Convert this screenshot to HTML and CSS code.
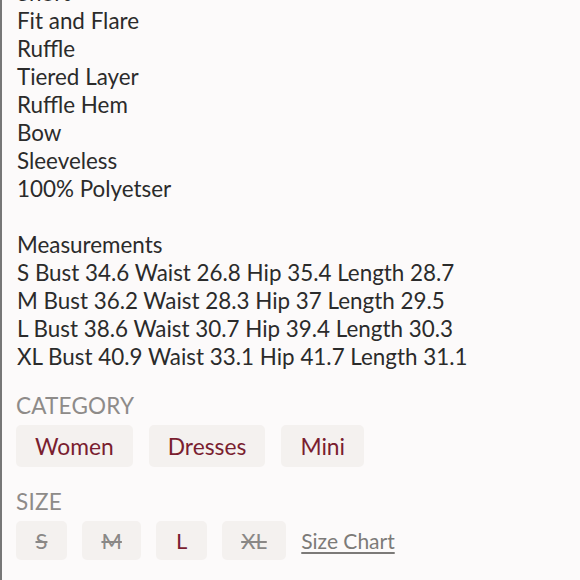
FILE: index.html
```html
<!DOCTYPE html>
<html>
<head>
<meta charset="utf-8">
<link rel="stylesheet" href="styles.css">
</head>
<body>
<div class="page">
  <div class="desc">
    <div>Short</div>
    <div>Fit and Flare</div>
    <div>Ruffle</div>
    <div>Tiered Layer</div>
    <div>Ruffle Hem</div>
    <div>Bow</div>
    <div>Sleeveless</div>
    <div>100% Polyetser</div>
    <div class="blank">&nbsp;</div>
    <div>Measurements</div>
    <div>S Bust 34.6 Waist 26.8 Hip 35.4 Length 28.7</div>
    <div>M Bust 36.2 Waist 28.3 Hip 37 Length 29.5</div>
    <div>L Bust 38.6 Waist 30.7 Hip 39.4 Length 30.3</div>
    <div>XL Bust 40.9 Waist 33.1 Hip 41.7 Length 31.1</div>
  </div>

  <div class="section category">
    <div class="label">Category</div>
    <div class="chips">
      <span class="chip">Women</span>
      <span class="chip">Dresses</span>
      <span class="chip">Mini</span>
    </div>
  </div>

  <div class="section size">
    <div class="label">Size</div>
    <div class="chips">
      <span class="chip size-chip out">S</span>
      <span class="chip size-chip out">M</span>
      <span class="chip size-chip">L</span>
      <span class="chip size-chip out">XL</span>
      <a class="size-chart" href="#">Size Chart</a>
    </div>
  </div>
</div>
</body>
</html>
```

FILE: styles.css
```css
html, body {
  margin: 0;
  padding: 0;
  background: #fcfafa;
}
body {
  font-family: "Lato", "Liberation Sans", sans-serif;
  color: #2b2b2b;
  height: 580px;
  overflow: hidden;
}
.page {
  border-left: 2px solid #777;
  padding-left: 15px;
  height: 620px;
}
.desc {
  margin-top: -21px;
  font-size: 22.4px;
  line-height: 28px;
}
.section {
  display: flex;
  flex-direction: column;
}
.category {
  margin-top: 25px;
}
.size {
  margin-top: 25px;
}
.label {
  text-transform: uppercase;
  color: #8e8b89;
  font-size: 22.5px;
  line-height: 20px;
  letter-spacing: 0.2px;
  margin-left: -1px;
}
.chips {
  display: flex;
  align-items: center;
  gap: 16px;
  margin-top: 9px;
  margin-left: -1px;
}
.chip {
  background: #f4f1ef;
  border-radius: 5px;
  color: #7a1e30;
  font-size: 22.8px;
  height: 42px;
  line-height: 42px;
  padding: 0 19px;
}
.size .chips {
  gap: 15px;
  margin-top: 9px;
}
.size-chip {
  height: 39px;
  line-height: 39px;
  font-size: 22px;
  padding: 0 19.5px;
}
.size-chip.out {
  color: #8a8886;
  text-decoration: line-through;
  text-decoration-thickness: 1.5px;
}
.size-chart {
  color: #7c7a78;
  font-size: 21px;
  text-decoration: underline;
  text-underline-offset: 3px;
  text-decoration-thickness: 1.5px;
}
```
